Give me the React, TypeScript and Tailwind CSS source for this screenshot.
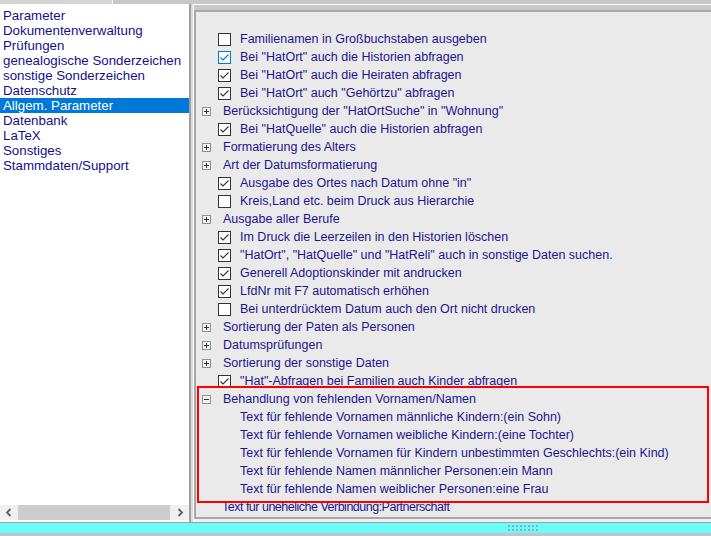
import React from 'react';

type Row =
  | { kind: 'check'; label: string; checked?: boolean; focus?: boolean }
  | { kind: 'group'; label: string; open?: boolean }
  | { kind: 'child'; label: string }
  | { kind: 'plain'; label: string };

const navItems = [
  'Parameter',
  'Dokumentenverwaltung',
  'Prüfungen',
  'genealogische Sonderzeichen',
  'sonstige Sonderzeichen',
  'Datenschutz',
  'Allgem. Parameter',
  'Datenbank',
  'LaTeX',
  'Sonstiges',
  'Stammdaten/Support',
];

const rows: Row[] = [
  { kind: 'check', label: 'Familienamen in Großbuchstaben ausgeben' },
  { kind: 'check', label: 'Bei "HatOrt" auch die Historien abfragen', checked: true, focus: true },
  { kind: 'check', label: 'Bei "HatOrt" auch die Heiraten abfragen', checked: true },
  { kind: 'check', label: 'Bei "HatOrt" auch "Gehörtzu" abfragen', checked: true },
  { kind: 'group', label: 'Berücksichtigung der "HatOrtSuche" in "Wohnung"' },
  { kind: 'check', label: 'Bei "HatQuelle" auch die Historien abfragen', checked: true },
  { kind: 'group', label: 'Formatierung des Alters' },
  { kind: 'group', label: 'Art der Datumsformatierung' },
  { kind: 'check', label: 'Ausgabe des Ortes nach Datum ohne "in"', checked: true },
  { kind: 'check', label: 'Kreis,Land etc. beim Druck aus Hierarchie' },
  { kind: 'group', label: 'Ausgabe aller Berufe' },
  { kind: 'check', label: 'Im Druck die Leerzeilen in den Historien löschen', checked: true },
  { kind: 'check', label: '"HatOrt", "HatQuelle" und "HatReli" auch in sonstige Daten suchen.', checked: true },
  { kind: 'check', label: 'Generell Adoptionskinder mit andrucken', checked: true },
  { kind: 'check', label: 'LfdNr mit F7 automatisch erhöhen', checked: true },
  { kind: 'check', label: 'Bei unterdrücktem Datum auch den Ort nicht drucken' },
  { kind: 'group', label: 'Sortierung der Paten als Personen' },
  { kind: 'group', label: 'Datumsprüfungen' },
  { kind: 'group', label: 'Sortierung der sonstige Daten' },
  { kind: 'check', label: '"Hat"-Abfragen bei Familien auch Kinder abfragen', checked: true },
  { kind: 'group', label: 'Behandlung von fehlenden Vornamen/Namen', open: true },
  { kind: 'child', label: 'Text für fehlende Vornamen männliche Kindern:(ein Sohn)' },
  { kind: 'child', label: 'Text für fehlende Vornamen weibliche Kindern:(eine Tochter)' },
  { kind: 'child', label: 'Text für fehlende Vornamen für Kindern unbestimmten Geschlechts:(ein Kind)' },
  { kind: 'child', label: 'Text für fehlende Namen männlicher Personen:ein Mann' },
  { kind: 'child', label: 'Text für fehlende Namen weiblicher Personen:eine Frau' },
  { kind: 'plain', label: 'Text für uneheliche Verbindung:Partnerschaft' },
];

function CheckBox({ checked, focus }: { checked?: boolean; focus?: boolean }) {
  const color = focus ? '#0078d7' : '#333333';
  return (
    <svg width="13" height="13" viewBox="0 0 13 13" className="shrink-0">
      <rect x="0.5" y="0.5" width="12" height="12" fill="#ffffff" stroke={color} />
      {checked && (
        <polyline points="2.5,6.5 5,9 10.5,3.5" fill="none" stroke={color} strokeWidth="1.1" />
      )}
    </svg>
  );
}

function Expander({ open }: { open?: boolean }) {
  return (
    <svg width="9" height="9" viewBox="0 0 9 9" className="shrink-0">
      <rect x="0.5" y="0.5" width="8" height="8" fill="#f4f4f4" stroke="#8f8f8f" />
      <line x1="2" y1="4.5" x2="7" y2="4.5" stroke="#333" />
      {!open && <line x1="4.5" y1="2" x2="4.5" y2="7" stroke="#333" />}
    </svg>
  );
}

function OptionRow({ row }: { row: Row }) {
  if (row.kind === 'check') {
    return (
      <div className="h-[18px] flex items-center pl-[22px] gap-[9px]">
        <CheckBox checked={row.checked} focus={row.focus} />
        <span className="whitespace-nowrap">{row.label}</span>
      </div>
    );
  }
  if (row.kind === 'group') {
    return (
      <div className="h-[18px] flex items-center pl-[6px] gap-[12px]">
        <Expander open={row.open} />
        <span className="whitespace-nowrap">{row.label}</span>
      </div>
    );
  }
  if (row.kind === 'child') {
    return (
      <div className="h-[18px] flex items-center pl-[44px]">
        <span className="whitespace-nowrap">{row.label}</span>
      </div>
    );
  }
  return (
    <div className="h-[18px] flex items-center pl-[26px]">
      <span className="whitespace-nowrap tracking-[-0.5px]">{row.label}</span>
    </div>
  );
}

export default function App() {
  return (
    <div
      className="w-[711px] h-[536px] bg-[#f0f0f0] flex flex-col overflow-hidden relative text-[#1c1490]"
      style={{ fontFamily: '"Liberation Sans", Arial, sans-serif' }}
    >
      {/* top strip */}
      <div className="h-[4px] flex shrink-0">
        <div className="w-[112px] bg-[#d4d4d4]" />
        <div className="w-[1px] bg-[#f4f4f4]" />
        <div className="flex-1 bg-[#c8c8c8]" />
      </div>

      <div className="flex flex-1 min-h-0">
        {/* left navigation */}
        <div className="w-[189px] bg-white flex flex-col shrink-0 text-[13.3px]">
          <div className="flex-1 pt-[4px]">
            {navItems.map((item) => (
              <div
                key={item}
                className={
                  item === 'Allgem. Parameter'
                    ? 'h-[15px] leading-[15px] pl-[3px] bg-[#0078d7] text-white'
                    : 'h-[15px] leading-[15px] pl-[3px] text-[#14108c]'
                }
              >
                {item}
              </div>
            ))}
          </div>
          <div className="h-[15px] bg-[#f0f0f0] flex items-center shrink-0">
            <div className="w-[18px] flex justify-center">
              <svg width="8" height="9" viewBox="0 0 8 9">
                <polyline points="5.5,1 2,4.5 5.5,8" fill="none" stroke="#606060" strokeWidth="1.8" />
              </svg>
            </div>
            <div className="flex-1 h-full bg-[#cdcdcd]" />
            <div className="w-[19px] flex justify-center">
              <svg width="8" height="9" viewBox="0 0 8 9">
                <polyline points="2.5,1 6,4.5 2.5,8" fill="none" stroke="#606060" strokeWidth="1.8" />
              </svg>
            </div>
          </div>
          <div className="h-[2px] bg-white shrink-0" />
        </div>

        {/* splitter */}
        <div className="w-[2px] bg-[#a0a0a0] shrink-0" />
        <div className="w-[2px] bg-[#dcdcdc] shrink-0" />
        <div className="w-[1px] bg-white shrink-0" />

        {/* right options panel */}
        <div className="flex-1 flex flex-col min-w-0 text-[12.5px]">
          <div className="h-[1px] bg-white shrink-0" />
          <div className="h-[5px] bg-[#c8c8c8] shrink-0" />
          <div className="flex-1 min-h-0 border-l-2 border-t-2 border-b-2 border-[#a8a8a8] bg-[#eaeaea] overflow-hidden">
            <div className="pt-[18px]">
              {rows.map((row, i) => (
                <OptionRow key={i} row={row} />
              ))}
            </div>
          </div>
          <div className="h-[3px] bg-[#f0f0f0] shrink-0" />
        </div>
      </div>

      {/* bottom status bar */}
      <div className="h-[1px] bg-[#a0a0a0] shrink-0" />
      <div className="h-[10px] bg-[#6afcfc] shrink-0 flex items-center">
        <div className="ml-[508px]">
          <svg width="30" height="7" viewBox="0 0 30 7">
            {[0, 1, 2, 3, 4, 5, 6, 7].map((k) => (
              <g key={k}>
                <rect x={k * 4} y="0" width="2" height="2" fill="#9ab" />
                <rect x={k * 4} y="4" width="2" height="2" fill="#9ab" />
              </g>
            ))}
          </svg>
        </div>
      </div>
      <div className="h-[3px] bg-[#c4c4c4] shrink-0" />

      {/* highlight frame */}
      <div className="absolute left-[197px] top-[386px] w-[512px] h-[117px] border-2 border-[#ff0000] pointer-events-none" />
    </div>
  );
}
